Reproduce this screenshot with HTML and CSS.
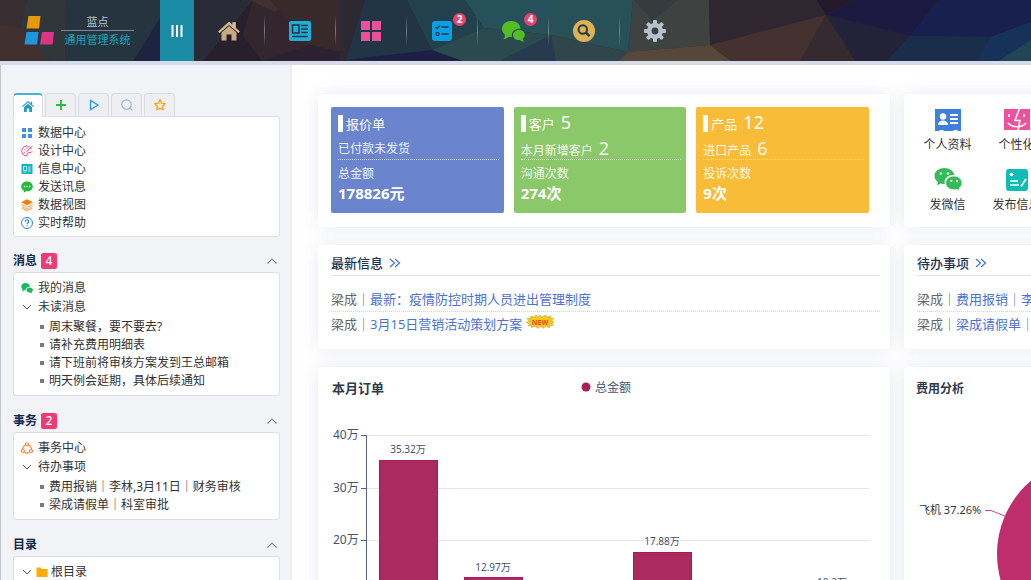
FILE: index.html
```html
<!DOCTYPE html>
<html lang="zh-CN">
<head>
<meta charset="utf-8">
<meta name="viewport" content="width=device-width, initial-scale=1">
<title>蓝点通用管理系统</title>
<link rel="stylesheet" href="styles.css">
</head>
<body>
<header class="topbar">
  <svg class="topbar-art" viewBox="0 0 1031 61" preserveAspectRatio="xMinYMin slice" aria-hidden="true">
    <rect width="1031" height="61" fill="#2c3038"/>
    <polygon points="0,0 27,0 20,26 0,40" fill="#392f33"/>
    <polygon points="0,25 24,28 50,61 0,61" fill="#40302f"/>
    <polygon points="27,0 66,0 65,61 50,61 20,26" fill="#2f373a"/>
    <polygon points="66,0 160,0 160,18 133,61 65,61" fill="#25343e"/>
    <polygon points="160,18 160,61 133,61" fill="#1e2440"/>
    <polygon points="194,0 253,0 203,61 194,61" fill="#292b36"/>
    <polygon points="253,0 243,35 262,61 203,61" fill="#271f2c"/>
    <polygon points="253,0 270,0 310,45 262,61 243,35" fill="#33262f"/>
    <polygon points="250,0 290,0 275,12" fill="#41302f"/>
    <polygon points="270,0 345,0 345,53 310,45" fill="#38292c"/>
    <polygon points="310,45 345,53 345,61 262,61" fill="#2c2130"/>
    <polygon points="340,0 365,0 346,61 340,61" fill="#2e2832"/>
    <polygon points="365,0 407,0 432,50 346,60" fill="#213547"/>
    <polygon points="407,0 465,0 484,28 432,50" fill="#22414c"/>
    <polygon points="346,60 432,50 463,61" fill="#1c2044"/>
    <polygon points="465,0 551,0 551,35 484,28" fill="#26505a"/>
    <polygon points="484,28 551,35 500,61 463,61 432,50" fill="#2a4a50"/>
    <polygon points="551,35 556,61 500,61" fill="#263c4e"/>
    <polygon points="551,0 633,0 628,52 551,35" fill="#285057"/>
    <polygon points="551,35 628,52 618,61 556,61" fill="#30464b"/>
    <polygon points="633,0 709,0 710,45 628,52" fill="#3e4342"/>
    <polygon points="633,0 678,0 653,21" fill="#343c40"/>
    <polygon points="628,52 710,45 731,61 618,61" fill="#57463a"/>
    <polygon points="709,0 817,0 826,15 710,45" fill="#30262f"/>
    <polygon points="710,45 826,15 800,61 731,61" fill="#453130"/>
    <polygon points="826,15 855,61 800,61" fill="#362a31"/>
    <polygon points="817,0 854,0 826,15" fill="#251a2b"/>
    <polygon points="826,15 910,36 887,61 855,61" fill="#222338"/>
    <polygon points="854,0 939,0 910,36 826,15" fill="#1c1a40"/>
    <polygon points="939,0 1031,0 1031,22 991,37 910,36" fill="#18214d"/>
    <polygon points="910,36 991,37 977,61 887,61" fill="#1a2e4c"/>
    <polygon points="991,37 1031,22 1031,40 998,61 977,61" fill="#173258"/>
    <polygon points="1031,40 998,61 1031,61" fill="#1f4557"/>
  </svg>
  <div class="brand">
    <svg width="32" height="32" viewBox="0 0 32 32" aria-hidden="true">
      <path d="M5.500 1h12l-1.500 12.500h-12.500z" fill="#e8980c"/>
      <path d="M3.500 17h12l-1.500 12.500h-12.500z" fill="#2196e0"/>
      <path d="M19 17h12l-1.500 12.500h-12.500z" fill="#dc3586"/>
    </svg>
    <div class="brand-text"><span class="brand-name">蓝点</span><span class="brand-sub">通用管理系统</span></div>
  </div>
  <button class="menu-btn" aria-label="菜单"><svg width="12" height="14" viewBox="0 0 12 14"><path d="M1.500 1v12M6 1v12M10.500 1v12" stroke="#fff" stroke-width="2"/></svg></button>
  <nav class="topnav">
    <a href="#" aria-label="首页"><svg width="24" height="22" viewBox="0 0 24 22"><path d="M12 2L1.500 11.500l1 1.200L12 4.500l9.500 8.200 1-1.200-4-3.600V2.500h-2.800v3z" fill="#dcc193" stroke="#dcc193" stroke-width=".6"/><path d="M4.500 12.500L12 6l7.500 6.500V20.500h-5v-6h-5v6h-5z" fill="#c9a984"/></svg></a>
    <a href="#" aria-label="资讯"><svg width="22" height="20" viewBox="0 0 22 20"><rect width="22" height="20" rx="2" fill="#1faed6"/><path d="M3.500 4h6.500v8h-6.500zM12 4.500h7M12 8h7M12 11.500h7M3 15.500h16" fill="none" stroke="#20303e" stroke-width="1.500"/></svg></a>
    <a href="#" aria-label="应用"><svg width="20" height="20" viewBox="0 0 20 20" fill="#e8509a"><path d="M0 0h9v9H0zM11 0h9v9h-9zM0 11h9v9H0zM11 11h9v9h-9z"/></svg></a>
    <a href="#" aria-label="任务"><svg width="20" height="20" viewBox="0 0 20 20"><rect width="20" height="20" rx="3" fill="#07a0e6"/><path d="M3.500 6l1.500 1.500 3-3M9.500 6h7M9.500 13h7" fill="none" stroke="#1b3947" stroke-width="1.500"/><circle cx="5.500" cy="13" r="1.600" fill="none" stroke="#1b3947" stroke-width="1.200"/></svg><b class="count">2</b></a>
    <a href="#" aria-label="聊天"><svg width="24" height="22" viewBox="0 0 24 22" fill="#52bd24"><path d="M10.500 1C5 1 1 4.500 1 8.800c0 2.500 1.200 4.400 3 5.900.1 1.800-.8 3.500-2 4.600 2.500 0 4.300-.9 5.700-2.500 1.200.2 2.200.3 3.300.1-.9-5 2.500-8.400 8.600-8C19 4 15.500 1 10.500 1z"/><path d="M18 10c-3.500 0-6 2.200-6 5.100 0 3.300 3.100 5.500 7 4.900 1 1 2.300 1.600 4 1.600-.8-.9-1.200-1.800-1.100-2.900 1.200-1 2-2.200 2-3.600C23.900 12.200 21.500 10 18 10z"/></svg><b class="count">4</b></a>
    <a href="#" aria-label="搜索"><svg width="22" height="22" viewBox="0 0 22 22"><circle cx="11" cy="11" r="11" fill="#deb152"/><circle cx="9.800" cy="9.500" r="4.200" fill="none" stroke="#263a44" stroke-width="2"/><path d="M13 12.700l3.500 3.500" stroke="#263a44" stroke-width="2.400"/></svg></a>
    <a href="#" aria-label="设置"><svg width="22" height="22" viewBox="0 0 22 22"><g fill="#b7c0cd"><circle cx="11" cy="11" r="8"/><g id="teeth"><rect x="9" y="0" width="4" height="22" rx="1"/><rect x="0" y="9" width="22" height="4" rx="1"/></g><use href="#teeth" transform="rotate(45 11 11)"/></g><circle cx="11" cy="11" r="3.400" fill="#3a4041"/></svg></a>
  </nav>
</header>
<div class="shell">
  <aside class="sidebar">
    <div class="tabs">
      <button class="tab active" aria-label="主页"><svg width="12" height="11" viewBox="0 0 12 11" fill="#1b9bc6"><path d="M6 0L0 5.300l.7.800L6 1.600l5.300 4.500.7-.8-1.800-1.600V.7H8.700v1.700z"/><path d="M2 6.200L6 2.800l4 3.400V11H7.200V7.500H4.800V11H2z"/></svg></button>
      <button class="tab" aria-label="新增"><svg width="12" height="12" viewBox="0 0 12 12"><path d="M6 1v10M1 6h10" stroke="#27bd3b" stroke-width="1.800"/></svg></button>
      <button class="tab" aria-label="运行"><svg width="12" height="12" viewBox="0 0 12 12"><path d="M2.500 1.500v9L10 6z" fill="none" stroke="#2c96e6" stroke-width="1.300"/></svg></button>
      <button class="tab" aria-label="查找"><svg width="12" height="12" viewBox="0 0 12 12" fill="none" stroke="#9fb1e0" stroke-width="1.200"><circle cx="5.500" cy="5.500" r="4.700"/><path d="M9 9l2.300 2.300"/></svg></button>
      <button class="tab" aria-label="收藏"><svg width="12" height="12" viewBox="0 0 12 12"><path d="M6 .9l1.600 3.300 3.600.5-2.600 2.500.6 3.600L6 9.100l-3.200 1.700.6-3.600L.8 4.700l3.600-.5z" fill="none" stroke="#f5a50c" stroke-width="1.300" stroke-linejoin="round"/></svg></button>
    </div>
    <ul class="box box-first">
      <li><svg viewBox="0 0 12 12" fill="#3b93e6"><path d="M1 1h4v4H1zM7 1h4v4H7zM1 7h4v4H1zM7 7h4v4H7z"/></svg><a href="#">数据中心</a></li>
      <li><svg viewBox="0 0 12 12" fill="none" stroke="#e0418a"><path d="M10.300 4A5 5 0 1 0 5 11c1.500-.2.500-2 1.700-2.900C8 7.300 10.500 8 11 6.500M11.500.8L5.500 7"/><path d="M3.300 5h.9M5.500 3.200h.9M3.300 7.700h.9" stroke-width="1.200"/></svg><a href="#">设计中心</a></li>
      <li><svg viewBox="0 0 12 12"><rect x=".5" y="1" width="11" height="10" fill="#14b3bd"/><path d="M2.500 3.500h3.200v4H2.500zM7 4h2.800M7 6h2.800M7 8h2.800M2.500 9h3" stroke="#d9f6f6" stroke-width=".8" fill="none"/></svg><a href="#">信息中心</a></li>
      <li><svg viewBox="0 0 12 12"><path d="M6 .5C2.700.5.200 2.700.200 5.400c0 1.800 1 3.300 2.700 4.200L2.700 11.800 5.200 10.200c3.700.5 6.600-1.800 6.600-4.800C11.800 2.700 9.300.5 6 .5z" fill="#28b93c"/><path d="M2.800 5.500h1.300M5.400 5.500h1.300M8 5.500h1.300" stroke="#fff" stroke-width="1.300"/></svg><a href="#">发送讯息</a></li>
      <li><svg viewBox="0 0 12 12"><path d="M6 .3l5.800 2.900L6 6.200.2 3.200z" fill="#f7780b"/><path d="M.5 5.500L6 8.200l5.500-2.700M.5 7.400L6 10.100l5.500-2.700M.5 9.200L6 11.700l5.500-2.500" fill="none" stroke="#f99a3b" stroke-width=".9"/></svg><a href="#">数据视图</a></li>
      <li><svg viewBox="0 0 12 12" fill="none" stroke="#2f84d8"><circle cx="6" cy="6" r="5.500"/><path d="M4.200 4.800C4.200 2.300 7.900 2.400 7.800 4.600 7.700 5.900 6 5.800 6 7.300M6 8.300v1.200" stroke-width="1.200"/></svg><a href="#">实时帮助</a></li>
    </ul>

    <section class="group">
      <h2>消息<b class="tag">4</b><button class="fold" aria-label="收起消息"><svg width="12" height="8" viewBox="0 0 12 8"><path d="M1.500 6.500L6 2l4.500 4.500"/></svg></button></h2>
      <div class="box">
        <ul class="tree">
          <li><svg viewBox="0 0 12 12" fill="#1fb561"><path d="M4.500 1C2 1 .2 2.600.2 4.600c0 1.200.6 2.100 1.500 2.800l-.9 2.300 2.600-1.500h1.300C4.600 6 6.500 4.600 9 4.700 8.800 2.500 7 1 4.500 1z"/><path d="M8.700 5.500c-1.800 0-3.200 1.100-3.200 2.600s1.500 2.700 3.500 2.500l1.900.9-.3-1.500c.8-.5 1.300-1.100 1.300-1.900 0-1.500-1.400-2.600-3.200-2.600z"/></svg><a href="#">我的消息</a></li>
          <li><svg viewBox="0 0 12 12" class="chev"><path d="M2 4l4 4 4-4"/></svg><a href="#">未读消息</a></li>
        </ul>
        <ul class="sub">
          <li><a href="#">周末聚餐，要不要去?</a></li>
          <li><a href="#">请补充费用明细表</a></li>
          <li><a href="#">请下班前将审核方案发到王总邮箱</a></li>
          <li><a href="#">明天例会延期，具体后续通知</a></li>
        </ul>
      </div>
    </section>

    <section class="group">
      <h2>事务<b class="tag">2</b><button class="fold" aria-label="收起事务"><svg width="12" height="8" viewBox="0 0 12 8"><path d="M1.500 6.500L6 2l4.500 4.500"/></svg></button></h2>
      <div class="box">
        <ul class="tree">
          <li><svg viewBox="0 0 12 12" fill="none" stroke="#f5812d" stroke-width="1.100"><circle cx="6" cy="2.300" r="1.500"/><circle cx="2" cy="9" r="1.500"/><circle cx="10" cy="9" r="1.500"/><path d="M4.300 2.900C2.700 3.800 1.600 5.200 1.500 7M7.700 2.900c1.600.9 2.700 2.300 2.800 4.100M3.800 10.400c1.500.7 2.900.7 4.400 0"/></svg><a href="#">事务中心</a></li>
          <li><svg viewBox="0 0 12 12" class="chev"><path d="M2 4l4 4 4-4"/></svg><a href="#">待办事项</a></li>
        </ul>
        <ul class="sub">
          <li><a href="#">费用报销｜李林,3月11日｜财务审核</a></li>
          <li><a href="#">梁成请假单｜科室审批</a></li>
        </ul>
      </div>
    </section>

    <section class="group">
      <h2>目录<button class="fold" aria-label="收起目录"><svg width="12" height="8" viewBox="0 0 12 8"><path d="M1.500 6.500L6 2l4.500 4.500"/></svg></button></h2>
      <div class="box">
        <ul class="tree">
          <li class="folder"><svg viewBox="0 0 12 12" class="chev"><path d="M2 4l4 4 4-4"/></svg><svg viewBox="0 0 12 12"><path d="M.5 1.500h4l1 1.500h6v8H.5z" fill="#fbad05"/></svg><a href="#">根目录</a></li>
        </ul>
      </div>
    </section>
  </aside>

  <main class="content">
    <section class="card stats">
      <article class="stat blue"><h3>报价单</h3><p class="line">已付款未发货</p><p>总金额</p><strong>178826元</strong></article>
      <article class="stat green"><h3>客户<span class="num">5</span></h3><p class="line">本月新增客户<span class="num">2</span></p><p>沟通次数</p><strong>274次</strong></article>
      <article class="stat amber"><h3>产品<span class="num">12</span></h3><p class="line">进口产品<span class="num">6</span></p><p>投诉次数</p><strong>9次</strong></article>
    </section>

    <nav class="card quick">
      <a href="#"><svg width="28" height="22" viewBox="0 0 28 22"><path d="M1 0h26v22h-3l-1-1h-3l-1 1h-9l-1-1H6l-1 1H1z" fill="#3f80dc"/><circle cx="9" cy="7.500" r="3.200" fill="#fff"/><path d="M4 16c0-6 10-6 10 0z" fill="#fff"/><path d="M16 6h8M16 10h8M16 14h8" stroke="#fff" stroke-width="2"/></svg>个人资料</a>
      <a href="#"><svg width="26" height="24" viewBox="0 0 26 24"><rect y="2" width="26" height="21" fill="#ee519e"/><path d="M16 0L11 13.500h5L14 24M5 7v3M20 7v3M4 16c4 5 14 5 18 0" fill="none" stroke="#fff" stroke-width="1.600"/></svg>个性化</a>
      <a href="#"><svg width="28" height="24" viewBox="0 0 28 24"><path d="M10.500 1C5 1 .5 4.500.5 9c0 2.600 1.300 4.600 3.500 6l-1 3.300 3.800-1.900c1.400.4 2.700.5 4 .5C9.500 11 14.500 7.500 20.500 8 19.500 4 15.500 1 10.500 1z" fill="#35ba57"/><path d="M20 9c-4.700 0-8.300 3.100-8.300 7s3.600 6.800 8.300 6.800c1 0 2-.1 3-.4l3 1.500-.8-2.700c1.800-1.300 2.800-3.100 2.800-5.200C28 12.100 24.500 9 20 9z" fill="#35ba57" stroke="#fff" stroke-width=".8"/><g fill="#d9f3de"><circle cx="7" cy="6.500" r="1.300"/><circle cx="14" cy="6.500" r="1.300"/><circle cx="17.300" cy="14" r="1.200"/><circle cx="23" cy="14" r="1.200"/></g></svg>发微信</a>
      <a href="#"><svg width="22" height="22" viewBox="0 0 22 22"><rect width="22" height="22" rx="3" fill="#10bcb4"/><circle cx="5.500" cy="5.500" r="1.800" fill="#fff"/><path d="M4 12h8M4 16h9M20 10l-5 7.500" stroke="#fff" stroke-width="1.700"/></svg>发布信息</a>
    </nav>

    <section class="card news">
      <h2>最新信息<svg class="more" width="12" height="10" viewBox="0 0 12 10"><path d="M1 1l4.500 4L1 9M6 1l4.500 4L6 9"/></svg></h2>
      <ul>
        <li><span>梁成｜</span><a href="#">最新：疫情防控时期人员进出管理制度</a></li>
        <li><span>梁成｜</span><a href="#">3月15日营销活动策划方案</a><svg class="new" width="28" height="14" viewBox="0 0 28 14"><path d="M14 0l2 2 4-2 1 2 4-1v2l3 .5-2 2 2 1.500-2 1.500 1.500 2-3.500.3-.5 2-4-1.500-2 2-3-1.700-3 1.700-2-2-4 1.200v-2L2 11l1.500-2L0 7.500l3-1.500L1 3.500l4-.5-.5-2L8 2l2-2 2 2z" fill="#f6c81c" stroke="#a2ad4a" stroke-width=".5"/><text x="14" y="9.500" text-anchor="middle">NEW</text></svg></li>
      </ul>
    </section>

    <section class="card news">
      <h2>待办事项<svg class="more" width="12" height="10" viewBox="0 0 12 10"><path d="M1 1l4.500 4L1 9M6 1l4.500 4L6 9"/></svg></h2>
      <ul>
        <li><span>梁成｜</span><a href="#">费用报销｜李林</a></li>
        <li><span>梁成｜</span><a href="#">梁成请假单｜科室审批</a></li>
      </ul>
    </section>

    <section class="card chart">
      <svg viewBox="0 0 572 300" role="img" aria-label="本月订单">
        <text class="title" x="14" y="26">本月订单</text>
        <circle cx="268" cy="20" r="4.500" fill="#ab1f5c"/>
        <text class="axis" x="277" y="25">总金额</text>
        <path d="M49 68.500h502M49 121.500h502M49 173.500h502M49 226.500h502" stroke="#e4e6ec"/>
        <path d="M48.500 68v211M43 68.500h6M43 121.500h6M43 173.500h6M43 226.500h6" stroke="#536480" fill="none"/>
        <g class="axis"><text x="15" y="72">40万</text><text x="15" y="125">30万</text><text x="15" y="177">20万</text><text x="15" y="230">10万</text></g>
        <g fill="#ab2a60" stroke="#ab1a58"><rect x="61.500" y="93.500" width="58" height="185"/><rect x="146.500" y="210.500" width="58" height="68"/><rect x="315.500" y="185.500" width="58" height="93"/><rect x="484.500" y="225.500" width="58" height="53"/></g>
        <g class="value"><text x="90" y="86">35.32万</text><text x="175" y="204">12.97万</text><text x="344" y="178">17.88万</text><text x="514" y="219">10.2万</text></g>
      </svg>
    </section>

    <section class="card chart">
      <svg viewBox="0 0 400 300" role="img" aria-label="费用分析">
        <text class="title small" x="12" y="26">费用分析</text>
        <circle cx="189" cy="187" r="96" fill="#be2e6c"/>
        <path d="M81 143.500h6l15 6" fill="none" stroke="#d0487f"/>
        <text class="slice" x="15" y="147">飞机 37.26%</text>
      </svg>
    </section>
  </main>
</div>
</body>
</html>
```
FILE: styles.css
```css
* { box-sizing: border-box; }
body {
  margin: 0;
  height: 100vh;
  overflow: hidden;
  display: flex;
  flex-direction: column;
  font: 12px/18px "Noto Sans", "Noto Sans CJK SC", sans-serif;
  color: #333;
  background: #fff;
}
h2, h3, p, ul { margin: 0; padding: 0; }
ul { list-style: none; }
a { color: inherit; text-decoration: none; }
button { border: 0; padding: 0; background: none; font: inherit; cursor: pointer; }
svg { flex: none; }

.topbar {
  position: relative;
  flex: none;
  display: flex;
  height: 65px;
  border-bottom: 4px solid #d6dbea;
  background: #2c3038;
}
.topbar-art { position: absolute; inset: 0; width: 100%; height: 100%; }
.brand {
  position: relative;
  display: flex;
  align-items: center;
  gap: 6px;
  width: 160px;
  padding-left: 23px;
}
.brand-text {
  display: flex;
  flex-direction: column;
  width: 73px;
  font-size: 11px;
  line-height: 17px;
  text-align: center;
}
.brand-name { color: #b9c4d0; border-bottom: 1px solid #7d8793; }
.brand-sub { color: #17a6b8; }
.menu-btn {
  position: relative;
  display: grid;
  place-items: center;
  width: 34px;
  background: #198ba5;
}
.topnav { position: relative; display: flex; }
.topnav a {
  position: relative;
  display: grid;
  place-items: center;
  width: 71px;
  border-right: 1px solid transparent;
}
.topnav a:not(:last-child) {
  border-image: linear-gradient(transparent 25%, #757d84 50%, transparent 75%) 1;
}
.count {
  position: absolute;
  top: 13px;
  left: 46px;
  width: 13px;
  height: 13px;
  border-radius: 7px;
  background: #e2456f;
  color: #fff;
  font-size: 10px;
  line-height: 13px;
  text-align: center;
}

.shell { flex: 1; display: flex; min-height: 0; overflow: hidden; }
.sidebar {
  flex: none;
  width: 292px;
  padding: 28px 10px 0 12px;
  border-left: 1px solid #c4c6cb;
  border-right: 2px solid #ecedf1;
  background: #f2f3f6;
}
.tabs { display: flex; gap: 2px; }
.tab {
  display: grid;
  place-items: center;
  width: 31px;
  height: 23px;
  border: 1px solid #d9dbe0;
  border-bottom: 0;
  border-radius: 4px 4px 0 0;
  background: #eeeff3;
}
.tab.active {
  width: 30px;
  height: 24px;
  margin-bottom: -1px;
  z-index: 1;
  border-top: 2px solid #46b2d3;
  background: #fff;
}
.box {
  width: 267px;
  padding: 5px 7px;
  border: 1px solid #dddfe4;
  border-radius: 3px;
  background: #fff;
}
.box-first { padding: 7px 7px 4px; }
.box li { display: flex; align-items: center; gap: 5px; height: 18px; }
.box li svg { width: 12px; height: 12px; }
.box .tree li { height: 19px; }
.chev { fill: none; stroke: #555; }
.box .sub { padding: 2px 0 0 19px; }
.box .sub li::before { content: ""; width: 4px; height: 4px; background: #7a7a7a; }
.box .tree .folder { gap: 3px; }
.group h2 {
  display: flex;
  align-items: center;
  gap: 4px;
  width: 267px;
  height: 22px;
  margin-top: 13px;
  padding-right: 2px;
  color: #10294f;
  font-size: 12px;
  font-weight: 700;
}
.group + .group h2 { margin-top: 14px; }
.tag {
  width: 16px;
  height: 16px;
  border-radius: 2px;
  background: #ef3a76;
  color: #fff;
  font-size: 12px;
  font-weight: 500;
  line-height: 16px;
  text-align: center;
}
.fold { display: grid; margin-left: auto; }
.fold path { fill: none; stroke: #8b8e96; stroke-width: 1.2; }

.content {
  flex: 1;
  min-width: 0;
  display: grid;
  grid-template-columns: minmax(572px, 2fr) minmax(400px, 1fr);
  align-content: start;
  gap: 18px 14px;
  padding: 29px 26px 0;
}
.card {
  border-radius: 4px;
  background: #fff;
  box-shadow: 0 0 18px rgba(60, 80, 140, 0.12);
}
.stats {
  display: grid;
  grid-template-columns: repeat(3, 1fr);
  gap: 10px;
  padding: 13px 21px 14px 13px;
}
.stat {
  padding: 5px 5px 10px 7px;
  border-radius: 2px;
  color: #fff;
  line-height: 20px;
}
.blue { background: #6a84ce; }
.green { background: #8ac86a; }
.amber { background: #f8bc38; }
.stat h3 {
  height: 26px;
  font-size: 13px;
  font-weight: 400;
  line-height: 24px;
}
.stat h3::before {
  content: "";
  display: inline-block;
  width: 5px;
  height: 17px;
  margin-right: 3px;
  vertical-align: -3px;
  background: #fff;
}
.stat .line {
  height: 22px;
  margin-bottom: 4px;
  border-bottom: 1px dotted rgba(255, 255, 255, 0.7);
  line-height: 22px;
}
.stat p { color: rgba(255, 255, 255, 0.92); }
.num { margin-left: 6px; font-size: 18px; line-height: 20px; }
.stat strong { display: block; height: 19px; font-size: 15px; line-height: 19px; }

.quick {
  display: grid;
  grid-template-columns: repeat(2, 69px);
  grid-template-rows: 60px 60px;
  align-content: center;
  padding: 0 9px;
}
.quick a {
  display: flex;
  flex-direction: column;
  align-items: center;
  justify-content: flex-end;
  gap: 5px;
  padding-bottom: 7px;
  white-space: nowrap;
}

.news { padding: 6px 10px 14px 13px; font-size: 13px; }
.news h2 {
  display: flex;
  align-items: center;
  gap: 6px;
  height: 25px;
  margin-bottom: 11px;
  border-bottom: 1px solid #e0e2e7;
  color: #1e3350;
  font-size: 13px;
  font-weight: 500;
}
.more { fill: none; stroke: #3f74d8; stroke-width: 1.2; }
.news li { display: flex; align-items: center; height: 24px; white-space: nowrap; }
.news li + li { border-top: 1px dotted #d3d5db; }
.news span { color: #666; }
.news a { color: #4c72d4; }
.new { margin: -4px 0 0 4px; }
.new text { font-size: 7px; font-weight: 700; fill: #e8501c; }

.chart svg { display: block; width: 100%; }
.chart text { font-size: 12px; }
.chart .title { font-size: 13px; font-weight: 700; fill: #303a48; }
.chart .small { font-size: 12px; }
.chart .axis, .chart .axis text { fill: #44546c; }
.chart .value text { font-size: 10px; text-anchor: middle; fill: #44546c; }
.chart .slice { font-size: 11px; fill: #333; }
```
